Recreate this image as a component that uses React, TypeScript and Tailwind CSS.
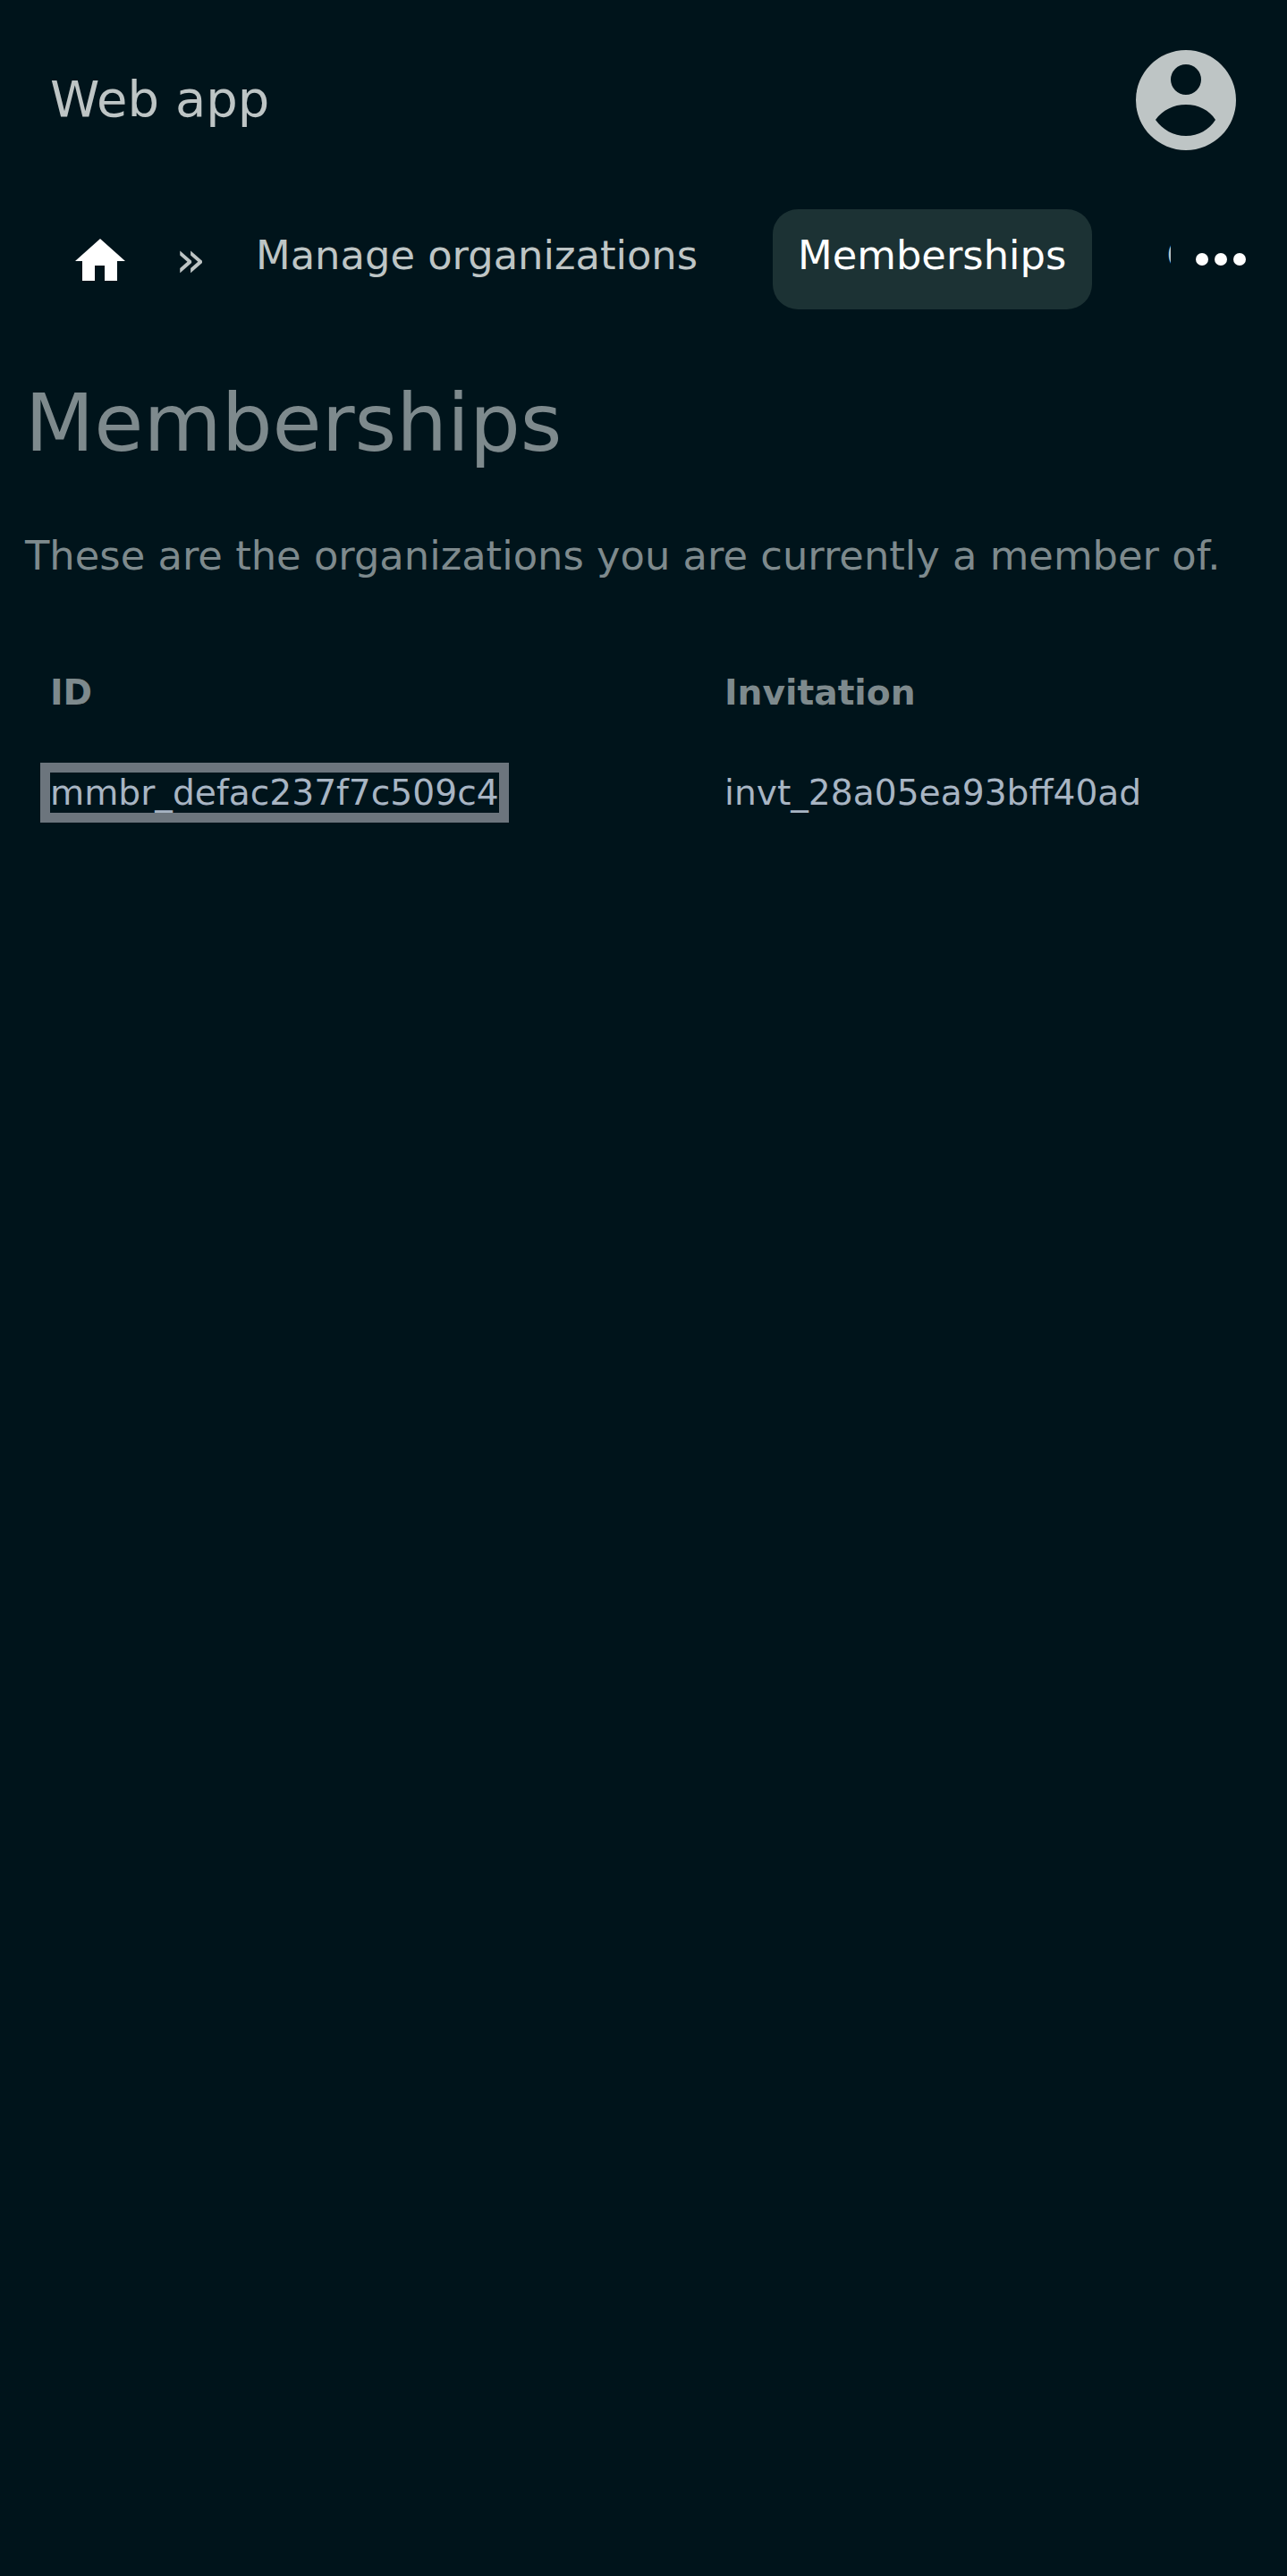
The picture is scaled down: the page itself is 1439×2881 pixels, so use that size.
import React from "react";

function HomeIcon() {
  return (
    <svg width="56" height="47" viewBox="0 0 56 47" fill="#ffffff" className="shrink-0">
      <path d="M28 0 L56 25 L47 25 L47 47 L33 47 L33 30 L22 30 L22 47 L8 47 L8 25 L0 25 Z" />
    </svg>
  );
}

function AvatarIcon() {
  return (
    <svg width="112" height="112" viewBox="0 0 112 112" fill="#bec5c5" className="shrink-0">
      <path
        fillRule="evenodd"
        d="M56 0 A56 56 0 1 1 56 112 A56 56 0 1 1 56 0 Z M56 16 A17 17 0 1 0 56 50 A17 17 0 1 0 56 16 Z M22 78 C30 67 42 61 56 61 C70 61 82 67 89 78 C82 89 70 96 56 96 C42 96 30 89 22 78 Z"
      />
    </svg>
  );
}

function App() {
  return (
    <div className="min-h-[2881px] bg-[#00141b] font-['DejaVu_Sans',sans-serif]">
      {/* Header */}
      <header className="flex items-center justify-between pt-[56px] pl-[56px] pr-[57px]">
        <span className="pb-[3px] text-[56px] leading-[109px] text-[#bec5c5]">Web app</span>
        <AvatarIcon />
      </header>

      {/* Nav */}
      <nav className="flex items-center pt-[66px] pl-[84px] pr-[46px] h-[178px]">
        <HomeIcon />
        <span className="ml-[56px] w-[33px] text-[56px] leading-[56px] text-[#bec5c5]">»</span>
        <ul className="ml-[29px] flex w-[1051px] items-start gap-[56px] overflow-hidden text-[44.8px] leading-[56px]">
          <li className="shrink-0 rounded-[28px] px-[28px] pt-[24px] pb-[32px] text-[#bec5c5]">Manage organizations</li>
          <li className="-mr-[1px] shrink-0 rounded-[28px] bg-[#1c3234] pl-[28px] pr-[29px] pt-[24px] pb-[32px] text-white">Memberships</li>
          <li className="shrink-0 rounded-[28px] px-[28px] pt-[24px] pb-[32px] text-[#bec5c5]">Organizations</li>
        </ul>
        <div className="ml-[28px] flex gap-[7px]">
          <span className="h-[14px] w-[14px] rounded-full bg-white" />
          <span className="h-[14px] w-[14px] rounded-full bg-white" />
          <span className="h-[14px] w-[14px] rounded-full bg-white" />
        </div>
      </nav>

      {/* Page */}
      <main className="px-[28px] pt-[74px]">
        <h1 className="text-[89.6px] leading-[106px] text-[#7e8a8d]">Memberships</h1>
        <p className="mt-[62px] text-[44.8px] leading-[68px] text-[#7e8a8d]">
          These are the organizations you are currently a member of.
        </p>
        <table className="mt-[62px] w-[1383px] table-fixed text-left text-[39.2px] leading-[58px]">
          <thead>
            <tr className="font-bold text-[#7e8a8d]">
              <th className="w-[754px] px-[28px] pt-[28px] pb-[27px]">ID</th>
              <th className="px-[28px] pt-[28px] pb-[27px]">Invitation</th>
            </tr>
          </thead>
          <tbody>
            <tr className="text-[#a8b5c3]">
              <td className="px-[28px] pt-[27px] pb-[28px]">
                <span className="outline-[11px] outline-solid outline-[#6c757d]">mmbr_defac237f7c509c4</span>
              </td>
              <td className="px-[28px] pt-[27px] pb-[28px]">invt_28a05ea93bff40ad</td>
            </tr>
          </tbody>
        </table>
      </main>
    </div>
  );
}

export default App;
